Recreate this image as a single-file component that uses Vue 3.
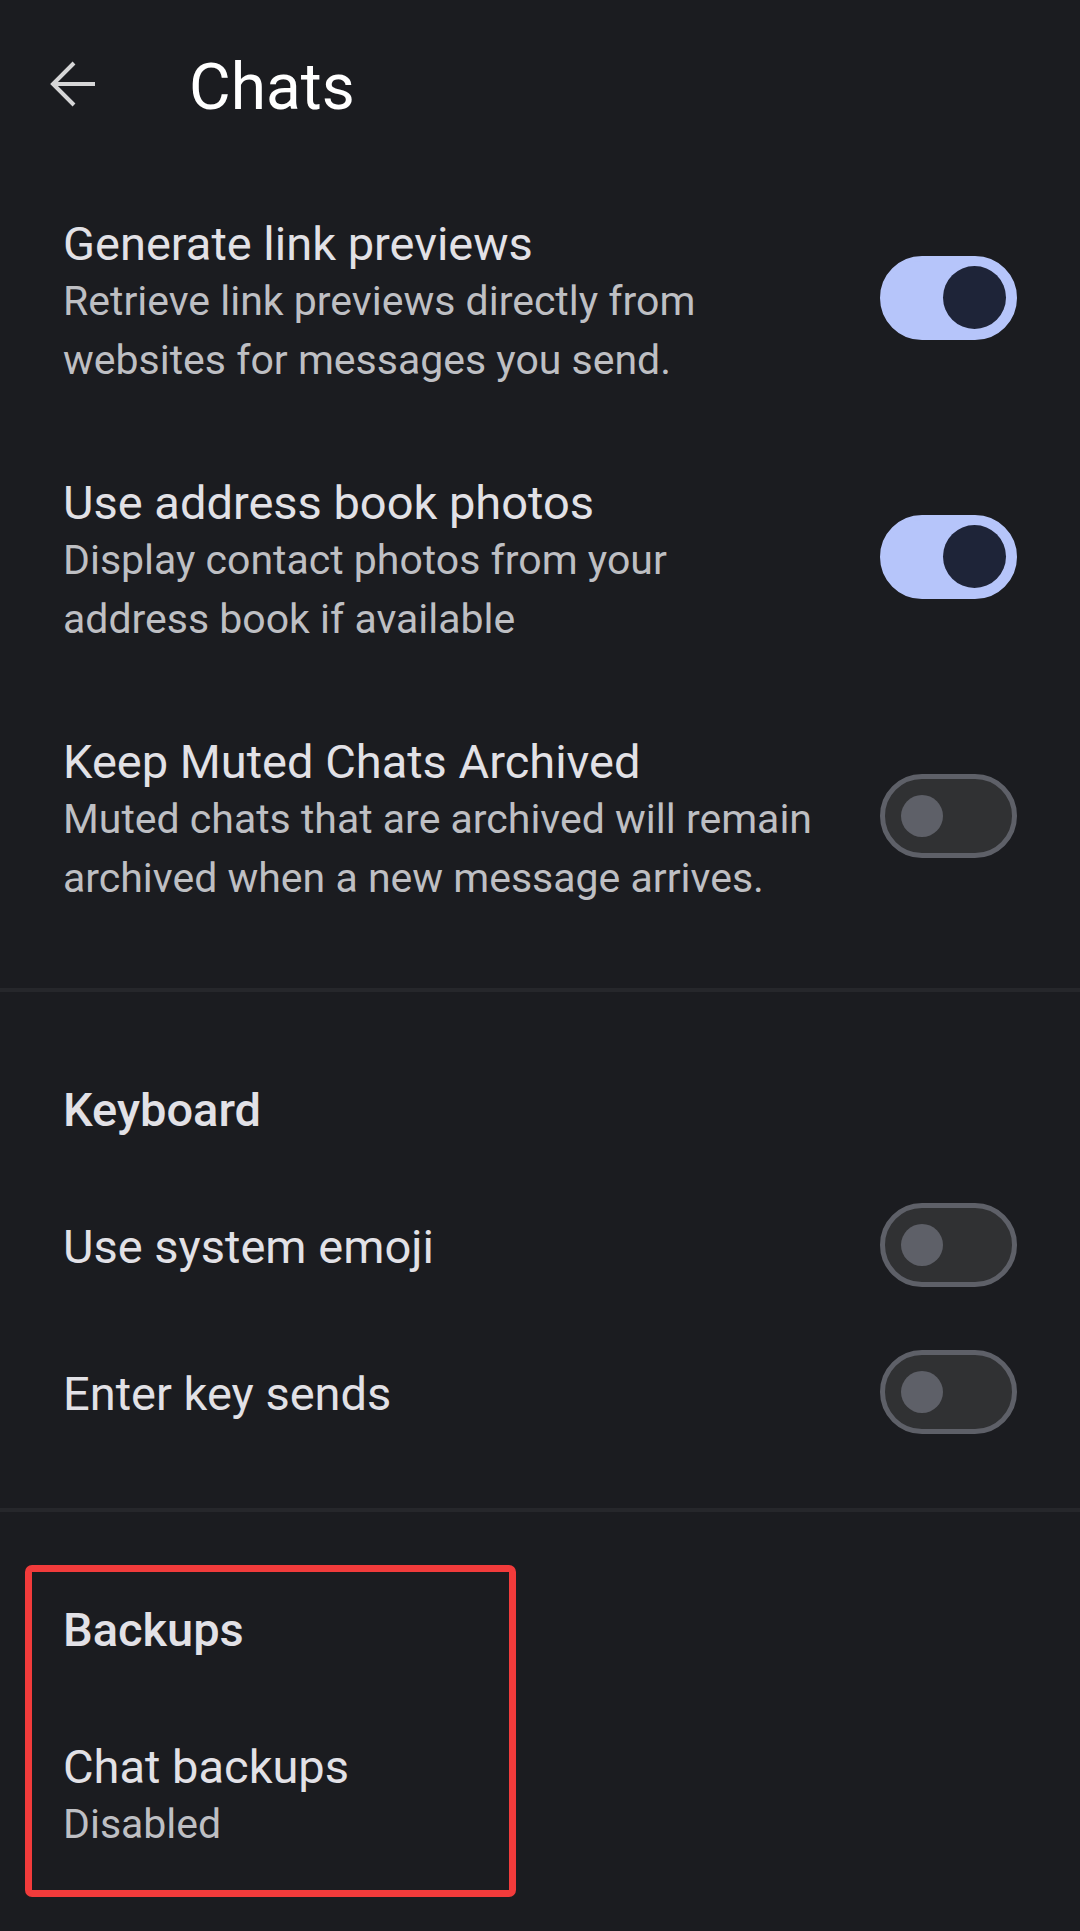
<script setup>
import { ref } from 'vue'

const chatOptions = ref([
  {
    id: 'link-previews',
    title: 'Generate link previews',
    summary: 'Retrieve link previews directly from websites for messages you send.',
    on: true,
  },
  {
    id: 'address-photos',
    title: 'Use address book photos',
    summary: 'Display contact photos from your address book if available',
    on: true,
  },
  {
    id: 'keep-archived',
    title: 'Keep Muted Chats Archived',
    summary: 'Muted chats that are archived will remain archived when a new message arrives.',
    on: false,
  },
])

const keyboardOptions = ref([
  { id: 'system-emoji', title: 'Use system emoji', on: false },
  { id: 'enter-sends', title: 'Enter key sends', on: false },
])
</script>

<template>
  <main class="screen">
    <header class="bar">
      <button class="back" type="button" aria-label="Back">
        <svg viewBox="0 0 46 46" width="46" height="46" aria-hidden="true">
          <path d="M45 23H3M24 2L3 23L24 44" fill="none" stroke="#d6d6d7" stroke-width="4" />
        </svg>
      </button>
      <h1 class="heading">Chats</h1>
    </header>

    <section class="group">
      <div v-for="option in chatOptions" :key="option.id" class="row">
        <label class="text with-summary" :for="option.id">
          <span class="title">{{ option.title }}</span>
          <span class="summary">{{ option.summary }}</span>
        </label>
        <input :id="option.id" v-model="option.on" class="switch" type="checkbox" role="switch" />
      </div>
    </section>

    <section class="group titled">
      <h2 class="section-title">Keyboard</h2>
      <div v-for="option in keyboardOptions" :key="option.id" class="row">
        <label class="text" :for="option.id">
          <span class="title">{{ option.title }}</span>
        </label>
        <input :id="option.id" v-model="option.on" class="switch" type="checkbox" role="switch" />
      </div>
    </section>

    <section class="group titled">
      <h2 class="section-title">Backups</h2>
      <button class="row link" type="button">
        <span class="text with-summary">
          <span class="title">Chat backups</span>
          <span class="summary">Disabled</span>
        </span>
      </button>
      <div class="highlight" aria-hidden="true"></div>
    </section>
  </main>
</template>

<style>
body {
  margin: 0;
  background: #1b1c20;
}
</style>

<style scoped>
.screen {
  box-sizing: border-box;
  min-height: 100vh;
  background: #1b1c20;
  color: #e2e1e6;
  font-family: Roboto, "Noto Sans", sans-serif;
}

.bar {
  display: flex;
  align-items: center;
  gap: 93px;
  height: 168px;
  padding: 0 50px;
  box-sizing: border-box;
}

.back {
  display: block;
  padding: 0;
  border: 0;
  background: none;
}

.back svg {
  display: block;
}

.heading {
  margin: 0;
  padding-top: 8px;
  color: #ffffff;
  font-size: 64px;
  font-weight: 400;
  line-height: 76px;
}

.group {
  position: relative;
  padding-bottom: 43px;
}

.group.titled {
  border-top: 4px solid #26272b;
  padding-top: 90px;
}

.group:last-child {
  padding-bottom: 0;
}

.section-title {
  margin: 0 0 33px;
  padding: 0 63px;
  font-size: 47px;
  font-weight: 500;
  line-height: 56px;
}

.row {
  display: flex;
  align-items: center;
  gap: 60px;
  width: 100%;
  padding: 0 63px;
  box-sizing: border-box;
}

.link {
  border: 0;
  background: none;
  color: inherit;
  font-family: inherit;
  text-align: left;
}

.text {
  display: flex;
  flex: 1;
  flex-direction: column;
  padding: 48px 0 43px;
}

.text.with-summary {
  padding-bottom: 37px;
}

.title {
  font-size: 47px;
  line-height: 56px;
}

.summary {
  color: #bebfc3;
  font-size: 41px;
  line-height: 59px;
}

.switch {
  position: relative;
  flex: none;
  width: 137px;
  height: 84px;
  margin: 0;
  box-sizing: border-box;
  appearance: none;
  border: 5px solid #5e6068;
  border-radius: 42px;
  background: #303133;
}

.switch::before {
  content: "";
  position: absolute;
  top: 16px;
  left: 16px;
  width: 42px;
  height: 42px;
  border-radius: 50%;
  background: #5e6068;
}

.switch:checked {
  border-color: #b6c5fa;
  background: #b6c5fa;
}

.switch:checked::before {
  top: 5px;
  left: 58px;
  width: 63px;
  height: 63px;
  background: #1e2438;
}

.highlight {
  position: absolute;
  top: 53px;
  left: 25px;
  width: 491px;
  height: 332px;
  box-sizing: border-box;
  border: 7px solid #f23b3b;
  border-radius: 7px;
  pointer-events: none;
}
</style>
